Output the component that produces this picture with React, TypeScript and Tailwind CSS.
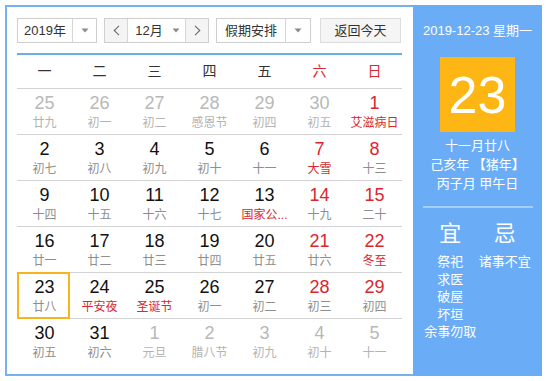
import React from "react";

type Day = { n: number; l: string; other?: boolean; red?: boolean; lred?: boolean; today?: boolean };

const rows: Day[][] = [
  [
    { n: 25, l: "廿九", other: true },
    { n: 26, l: "初一", other: true },
    { n: 27, l: "初二", other: true },
    { n: 28, l: "感恩节", other: true },
    { n: 29, l: "初四", other: true },
    { n: 30, l: "初五", other: true },
    { n: 1, l: "艾滋病日", red: true, lred: true },
  ],
  [
    { n: 2, l: "初七" },
    { n: 3, l: "初八" },
    { n: 4, l: "初九" },
    { n: 5, l: "初十" },
    { n: 6, l: "十一" },
    { n: 7, l: "大雪", red: true, lred: true },
    { n: 8, l: "十三", red: true },
  ],
  [
    { n: 9, l: "十四" },
    { n: 10, l: "十五" },
    { n: 11, l: "十六" },
    { n: 12, l: "十七" },
    { n: 13, l: "国家公...", lred: true },
    { n: 14, l: "十九", red: true },
    { n: 15, l: "二十", red: true },
  ],
  [
    { n: 16, l: "廿一" },
    { n: 17, l: "廿二" },
    { n: 18, l: "廿三" },
    { n: 19, l: "廿四" },
    { n: 20, l: "廿五" },
    { n: 21, l: "廿六", red: true },
    { n: 22, l: "冬至", red: true, lred: true },
  ],
  [
    { n: 23, l: "廿八", today: true },
    { n: 24, l: "平安夜", lred: true },
    { n: 25, l: "圣诞节", lred: true },
    { n: 26, l: "初一" },
    { n: 27, l: "初二" },
    { n: 28, l: "初三", red: true },
    { n: 29, l: "初四", red: true },
  ],
  [
    { n: 30, l: "初五" },
    { n: 31, l: "初六" },
    { n: 1, l: "元旦", other: true },
    { n: 2, l: "腊八节", other: true },
    { n: 3, l: "初九", other: true },
    { n: 4, l: "初十", other: true },
    { n: 5, l: "十一", other: true },
  ],
];

const weekdays = ["一", "二", "三", "四", "五", "六", "日"];

function Caret() {
  return (
    <svg width="8" height="5" viewBox="0 0 8 5">
      <path d="M0.5 0.5 L7.5 0.5 L4 4.5 Z" fill="#8a8a8a" />
    </svg>
  );
}

function Chevron({ dir }: { dir: "l" | "r" }) {
  return (
    <svg width="7" height="11" viewBox="0 0 7 11">
      <path
        d={dir === "l" ? "M6 0.8 L1.2 5.5 L6 10.2" : "M1 0.8 L5.8 5.5 L1 10.2"}
        fill="none"
        stroke="#6b6b6b"
        strokeWidth="1.1"
      />
    </svg>
  );
}

export default function App() {
  return (
    <div
      className="w-[547px] h-[381px] bg-white pt-[5px] pl-[5px] flex"
      style={{ fontFamily: '"Liberation Sans", "Noto Sans CJK SC", sans-serif' }}
    >
      <div className="w-[408px] h-[371px] border-2 border-r-0 border-[#76b3ec] pl-[10px] pt-[11px]">
        <div className="w-[385px]">
          <div className="flex h-[25px] text-[13px] text-[#333]">
            <div className="w-[80px] flex border border-[#cfcfcf] bg-white">
              <div className="w-[55px] flex items-center justify-center border-r border-[#d6d6d6]">2019年</div>
              <div className="flex-1 flex items-center justify-center">
                <Caret />
              </div>
            </div>
            <div className="ml-[7px] w-[105px] flex border border-[#cfcfcf]">
              <div className="w-[23px] flex items-center justify-center bg-[#f4f4f4] border-r border-[#d6d6d6]">
                <Chevron dir="l" />
              </div>
              <div className="flex-1 flex items-center justify-center gap-[9px] pl-[2px]">
                <span>12月</span>
                <Caret />
              </div>
              <div className="w-[23px] flex items-center justify-center bg-[#f4f4f4] border-l border-[#d6d6d6]">
                <Chevron dir="r" />
              </div>
            </div>
            <div className="ml-[7px] w-[95px] flex border border-[#cfcfcf]">
              <div className="w-[69px] flex items-center justify-center border-r border-[#d6d6d6]">假期安排</div>
              <div className="flex-1 flex items-center justify-center">
                <Caret />
              </div>
            </div>
            <div className="ml-[9px] w-[81px] flex items-center justify-center border border-[#dcdcdc] bg-[#f5f5f5]">
              返回今天
            </div>
          </div>
          <div className="mt-[10px] h-[2px] bg-[#6aaee9]" />
          <div className="grid grid-cols-7 h-[33px] items-center text-[14px] text-[#333]">
            {weekdays.map((w, i) => (
              <div key={w} className={"text-center " + (i >= 5 ? "text-[#d9272e]" : "")}>
                {w}
              </div>
            ))}
          </div>
          {rows.map((row, ri) => (
            <div key={ri} className="grid grid-cols-7 h-[46px] border-t border-[#d3d3d3]">
              {row.map((d, ci) => {
                const numColor = d.other ? "text-[#b8b8b8]" : d.red ? "text-[#d9272e]" : "text-[#111]";
                const lunColor = d.lred ? "text-[#d9272e]" : d.other ? "text-[#b3b3b3]" : "text-[#8e8e8e]";
                return (
                  <div key={ci} className="relative flex flex-col items-center pt-[4px]">
                    {d.today && (
                      <div className="absolute left-0 top-[-1px] w-[53px] h-[47px] border-2 border-[#f6b51d]" />
                    )}
                    <div className={"text-[18px] leading-[20px] " + numColor}>{d.n}</div>
                    <div className={"mt-[2px] text-[12px] leading-[16px] whitespace-nowrap " + lunColor}>{d.l}</div>
                  </div>
                );
              })}
            </div>
          ))}
        </div>
      </div>
      <div className="w-[129px] h-[371px] bg-[#6aadf6] text-white flex flex-col items-center">
        <div className="mt-[17px] text-[13px] leading-[18px] whitespace-nowrap">2019-12-23 星期一</div>
        <div className="mt-[17px] w-[75px] h-[75px] bg-[#fdb614] flex items-center justify-center text-[52px] leading-none">
          23
        </div>
        <div className="mt-[4px] text-[13px] leading-[19px] text-center">
          <div>十一月廿八</div>
          <div>己亥年 【猪年】</div>
          <div>丙子月 甲午日</div>
        </div>
        <div className="mt-[13px] w-[110px] h-[2px] bg-white/40" />
        <div className="w-full px-[10px] grid grid-cols-2">
          <div className="flex flex-col items-center">
            <div className="mt-[12px] text-[22px] leading-[28px]">宜</div>
            <div className="mt-[5px] text-[13px] leading-[17.5px] text-center">
              <div>祭祀</div>
              <div>求医</div>
              <div>破屋</div>
              <div>坏垣</div>
              <div className="whitespace-nowrap">余事勿取</div>
            </div>
          </div>
          <div className="flex flex-col items-center">
            <div className="mt-[12px] text-[22px] leading-[28px]">忌</div>
            <div className="mt-[5px] text-[13px] leading-[17.5px] text-center whitespace-nowrap">
              <div>诸事不宜</div>
            </div>
          </div>
        </div>
      </div>
    </div>
  );
}
